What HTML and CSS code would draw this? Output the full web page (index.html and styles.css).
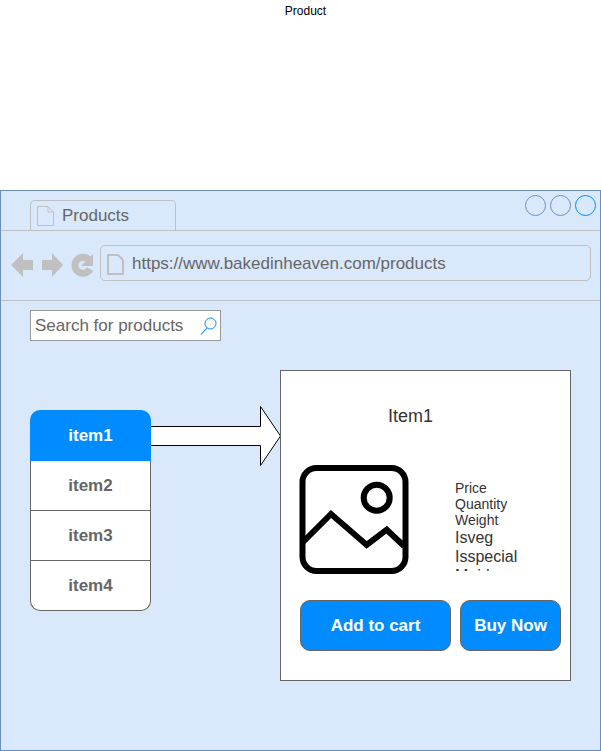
FILE: index.html
```html
<!DOCTYPE html>
<html lang="en">
<head>
  <meta charset="UTF-8" />
  <meta name="viewport" content="width=device-width, initial-scale=1.0"/>
  <title>Product</title>
  <link rel="stylesheet" href="styles.css">
</head>
<body>
  <div class="pageTitle">Product</div>

  <div class="browser">
    <div class="tabRow">
      <div class="tab">
        <svg class="pageIcon" width="17" height="20" viewBox="0 0 17 20">
          <path d="M0.500 0.500H11L16.500 6V19.500H0.500Z" fill="none" stroke="#c0c0c0" stroke-width="1"/>
          <path d="M11 0.500V6H16.500" fill="none" stroke="#c0c0c0" stroke-width="1"/>
        </svg>
        <span>Products</span>
      </div>
      <div class="windowBtns">
        <span class="circle"></span>
        <span class="circle"></span>
        <span class="circle active"></span>
      </div>
    </div>

    <div class="navRow">
      <svg class="navIcons" width="84" height="26" viewBox="0 0 84 26">
        <path d="M0 13L12 1V8H22V18H12V25Z" fill="#c0c0c0"/>
        <path d="M52 13L41 1V8H31V18H41V25Z" fill="#c0c0c0"/>
        <path d="M78 8A8 8 0 1 0 79 17" fill="none" stroke="#c0c0c0" stroke-width="7"/>
        <path d="M82 2V14H70Z" fill="#c0c0c0"/>
      </svg>
      <div class="addressBar">
        <svg class="pageIcon" width="17" height="21" viewBox="0 0 17 21">
          <path d="M1 1H11L16 6V20H1Z" fill="none" stroke="#c0c0c0" stroke-width="2"/>
        </svg>
        <span>https://www.bakedinheaven.com/products</span>
      </div>
    </div>

    <div class="content">
      <div class="search">
        <span>Search for products</span>
        <svg width="17" height="18" viewBox="0 0 17 18">
          <circle cx="10.500" cy="6.500" r="5.500" fill="none" stroke="#008cff" stroke-width="1"/>
          <path d="M7 11L1 17.500" stroke="#008cff" stroke-width="1.100" fill="none"/>
        </svg>
      </div>

      <div class="main">
        <div class="itemList">
          <div class="item selected">item1</div>
          <div class="item">item2</div>
          <div class="item">item3</div>
          <div class="item">item4</div>
        </div>

        <svg class="arrow" width="130" height="60" viewBox="0 0 130 60">
          <path d="M0 20.500H109.500V0.500L129.500 30L109.500 59.500V39.500H0" fill="#fff" stroke="#000" stroke-width="1"/>
        </svg>

        <div class="card">
          <div class="cardTitle">Item1</div>
          <div class="cardMiddle">
            <svg class="picture" width="110" height="110" viewBox="0 0 110 110">
              <rect x="3.500" y="3" width="103" height="103" rx="14" fill="none" stroke="#000" stroke-width="6"/>
              <circle cx="77.700" cy="32.700" r="13" fill="none" stroke="#000" stroke-width="6"/>
              <path d="M4 77L32 49L67.700 80L87.700 64.700L105 81" fill="none" stroke="#000" stroke-width="6"/>
            </svg>
            <div class="details">
              <div>Price</div>
              <div>Quantity</div>
              <div>Weight</div>
              <div class="big">Isveg</div>
              <div class="big">Isspecial</div>
              <div class="big">Maida</div>
            </div>
          </div>
          <div class="actions">
            <button class="addBtn">Add to cart</button>
            <button class="buyBtn">Buy Now</button>
          </div>
        </div>
      </div>
    </div>
  </div>
</body>
</html>
```

FILE: styles.css
```css
* { box-sizing: border-box; }

body {
  margin: 0;
  font-family: "Liberation Sans", Arial, sans-serif;
  background: #fff;
}

.pageTitle {
  height: 190px;
  padding: 4px 0 0 10px;
  text-align: center;
  font-size: 12px;
  line-height: 14px;
  color: #000;
}

.browser {
  height: 561px;
  background: #dae8fc;
  border: 1px solid #6c8ebf;
}

.tabRow {
  display: flex;
  justify-content: space-between;
  height: 40px;
  padding: 0 4px 0 29px;
  border-bottom: 1px solid #c0c0c0;
}

.tab {
  display: flex;
  align-items: center;
  gap: 8px;
  width: 146px;
  height: 31px;
  margin-top: 9px;
  padding-left: 6px;
  border: 1px solid #c0c0c0;
  border-bottom: none;
  border-radius: 5px 5px 0 0;
  font-size: 17px;
  color: #666;
}

.windowBtns {
  display: flex;
  gap: 4px;
  padding-top: 4px;
}

.circle {
  width: 21px;
  height: 21px;
  border: 1px solid #6c8ebf;
  border-radius: 50%;
}

.circle.active { border-color: #008cff; }

.navRow {
  display: flex;
  align-items: flex-start;
  height: 70px;
  padding: 14px 9px 0 10px;
  border-bottom: 1px solid #c0c0c0;
}

.navIcons { margin-top: 7px; flex-shrink: 0; }

.addressBar {
  display: flex;
  align-items: center;
  gap: 8px;
  flex: 1;
  height: 36px;
  margin-left: 5px;
  padding: 2px 0 0 6px;
  border: 1px solid #c0c0c0;
  border-radius: 5px;
  font-size: 17px;
  color: #666;
}

.content { padding: 9px 0 0 29px; }

.search {
  display: flex;
  align-items: center;
  justify-content: space-between;
  width: 191px;
  height: 31px;
  padding: 0 3px 0 4px;
  background: #fff;
  border: 1px solid #999;
  font-size: 17px;
  color: #666;
}

.main {
  display: flex;
  align-items: flex-start;
  margin-top: 29px;
}

.itemList {
  width: 121px;
  margin-top: 40px;
}

.item {
  display: flex;
  align-items: center;
  justify-content: center;
  height: 50px;
  background: #fff;
  border: 1px solid #666;
  border-top: none;
  font-size: 17px;
  font-weight: bold;
  color: #666;
}

.item:last-child { border-radius: 0 0 10px 10px; }

.item.selected {
  height: 51px;
  border: none;
  border-radius: 10px 10px 0 0;
  background: #008cff;
  color: #fff;
}

.arrow {
  margin: 36px -1px 0 0;
  flex-shrink: 0;
}

.card {
  width: 291px;
  height: 311px;
  background: #fff;
  border: 1px solid #666;
}

.cardTitle {
  height: 94px;
  padding: 35px 0 0 107px;
  font-size: 18px;
  line-height: 21px;
  color: #333;
}

.cardMiddle {
  display: flex;
  align-items: flex-start;
  height: 120px;
}

.picture { margin-left: 18px; flex-shrink: 0; }

.details {
  width: 70px;
  height: 91px;
  margin: 15px 0 0 46px;
  overflow: hidden;
  font-size: 14px;
  line-height: 16px;
  color: #333;
}

.details .big {
  font-size: 16px;
  line-height: 19px;
}

.actions {
  display: flex;
  gap: 9px;
  padding: 15px 0 0 19px;
}

button {
  height: 51px;
  border: 1px solid #666;
  border-radius: 10px;
  background: #008cff;
  color: #fff;
  font-family: inherit;
  font-size: 17px;
  font-weight: bold;
}

.addBtn { width: 151px; }

.buyBtn { width: 101px; }
```
